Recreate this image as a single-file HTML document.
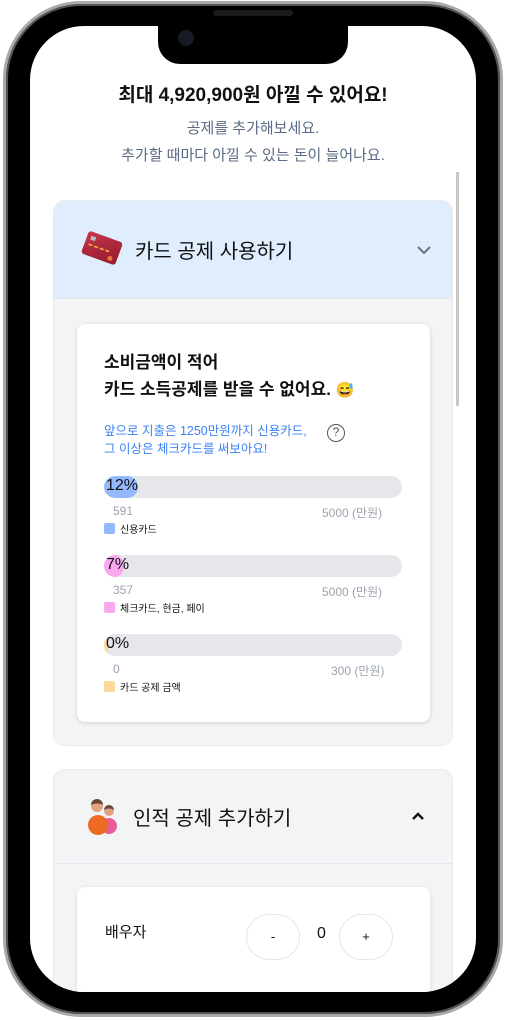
<!DOCTYPE html>
<html><head><meta charset="utf-8"><style>
*{margin:0;padding:0;box-sizing:border-box}
html,body{width:506px;height:1020px;overflow:hidden}
body{background:#fff;position:relative;font-family:"Liberation Sans","Noto Sans CJK KR",sans-serif}
.body{position:absolute;left:3px;top:1px;width:500px;height:1016px;border-radius:78px;background:#000;border:3px solid #a9aaa6;box-shadow:inset 0 0 0 2px #555}
.scr{position:absolute;left:30px;top:26px;width:446px;height:966px;border-radius:54px;background:#fff;overflow:hidden}
.notch{position:absolute;left:128px;top:-2px;width:190px;height:40px;background:#000;border-radius:0 0 22px 22px}
.a{position:absolute}
.t{left:0;width:446px;text-align:center}
.bar{position:absolute;left:74px;width:298px;height:22px;border-radius:11px;background:#e5e7eb;overflow:hidden}
.bar i{position:absolute;left:0;top:0;height:22px;border-radius:11px}
.bar b{position:absolute;left:2px;top:1px;font-weight:normal;font-size:16px;color:#111}
.lab{position:absolute;font-size:12px;color:#9ca3af}
.lg{position:absolute;left:74px;font-size:10px;color:#111;display:flex;align-items:center}
.lg s{display:inline-block;width:11px;height:11px;border-radius:2px;margin-right:5px}
.btn{position:absolute;width:54px;height:46px;border:1px solid #e5e7eb;border-radius:23px;text-align:center;line-height:44px;font-size:13px;color:#111}
</style></head><body>
<div class="body"></div>
<div class="scr">
<div class="a t" style="top:54px;font-size:19px;font-weight:bold;color:#111">최대 4,920,900원 아낄 수 있어요!</div>
<div class="a t" style="top:89px;font-size:15px;color:#5a6a85;line-height:27px">공제를 추가해보세요.<br>추가할 때마다 아낄 수 있는 돈이 늘어나요.</div>
<div class="a" style="left:426px;top:146px;width:3px;height:234px;background:#c8c8c8"></div>
<!-- section 1 -->
<div class="a" style="left:23px;top:174px;width:400px;height:546px;border-radius:12px;background:#f3f4f6;border:1px solid #e8eaee;overflow:hidden">
 <div class="a" style="left:0;top:0;width:400px;height:98px;background:#e0edfc;border-bottom:1px solid #e3e6ea"></div>
 <svg class="a" style="left:27px;top:26px" width="42" height="42" viewBox="0 0 42 42"><g transform="rotate(20 21 21)"><rect x="3" y="9" width="36" height="24" rx="3" fill="#b3243a"/><rect x="3" y="9" width="36" height="24" rx="3" fill="url(#g)"/><rect x="7" y="13" width="5" height="4" fill="#bbb"/><line x1="7" y1="22" x2="30" y2="22" stroke="#f5b041" stroke-width="1.6" stroke-dasharray="4 2"/><circle cx="32" cy="28" r="2.5" fill="#e8743b"/></g><defs><linearGradient id="g" x1="0" y1="0" x2="1" y2="1"><stop offset="0" stop-color="#d4455a" stop-opacity=".6"/><stop offset="1" stop-color="#7a1020" stop-opacity=".5"/></linearGradient></defs></svg>
 <div class="a" style="left:81px;top:34px;font-size:20px;color:#111">카드 공제 사용하기</div>
 <svg class="a" style="left:362px;top:43px" width="16" height="12"><path d="M2 3l6 6 6-6" fill="none" stroke="#6b7280" stroke-width="2"/></svg>
 <div class="a" style="left:23px;top:123px;width:353px;height:398px;background:#fff;border-radius:8px;box-shadow:0 1px 4px rgba(0,0,0,.15)">
  <div class="a" style="left:27px;top:25px;font-size:17px;font-weight:bold;color:#111;line-height:27px">소비금액이 적어<br>카드 소득공제를 받을 수 없어요. <span style="font-size:15px">😅</span></div>
  <div class="a" style="left:27px;top:98px;font-size:12.5px;color:#3b82f6;line-height:18px">앞으로 지출은 1250만원까지 신용카드,<br>그 이상은 체크카드를 써보아요!</div>
  <div class="a" style="left:250px;top:100px;width:18px;height:18px;border:1.5px solid #555;border-radius:50%;font-size:12px;text-align:center;line-height:15px;color:#555">?</div>
  <div class="bar" style="top:152px;left:27px"><i style="width:34px;background:#93b8fb"></i><b>12%</b></div>
  <div class="lab" style="left:36px;top:180px">591</div><div class="lab" style="left:245px;top:180px">5000 (만원)</div>
  <div class="lg" style="left:27px;top:197px"><s style="background:#93b8fb"></s>신용카드</div>
  <div class="bar" style="top:231px;left:27px"><i style="width:20px;background:#f9a8f0"></i><b>7%</b></div>
  <div class="lab" style="left:36px;top:259px">357</div><div class="lab" style="left:245px;top:259px">5000 (만원)</div>
  <div class="lg" style="left:27px;top:276px"><s style="background:#f9a8f0"></s>체크카드, 현금, 페이</div>
  <div class="bar" style="top:310px;left:27px"><i style="width:4px;background:#fcd99b"></i><b>0%</b></div>
  <div class="lab" style="left:36px;top:338px">0</div><div class="lab" style="left:254px;top:338px">300 (만원)</div>
  <div class="lg" style="left:27px;top:355px"><s style="background:#fcd99b"></s>카드 공제 금액</div>
 </div>
</div>
<!-- section 2 -->
<div class="a" style="left:23px;top:743px;width:400px;height:223px;border-radius:12px 12px 0 0;background:#f3f4f6;border:1px solid #e8eaee;border-bottom:none;overflow:hidden">
 <div class="a" style="left:0;top:93px;width:400px;height:1px;background:#e3e6ea"></div>
 <svg class="a" style="left:33px;top:28px" width="32" height="40" viewBox="0 0 32 40"><circle cx="10" cy="8" r="6" fill="#e0a580"/><path d="M4 7a6 6 0 0 1 12 0c-3-2-8-2-12 0z" fill="#6b4438"/><circle cx="22" cy="13" r="5" fill="#e0a580"/><path d="M17 12a5 5 0 0 1 10 0c-3-2-7-2-10 0z" fill="#6b4438"/><circle cx="22" cy="28" r="8" fill="#e85a9a"/><circle cx="11" cy="27" r="10" fill="#ec6a22"/></svg>
 <div class="a" style="left:79px;top:32px;font-size:20px;color:#111">인적 공제 추가하기</div>
 <svg class="a" style="left:356px;top:40px" width="16" height="12"><path d="M3 9l5-5 5 5" fill="none" stroke="#111" stroke-width="2.4"/></svg>
 <div class="a" style="left:23px;top:117px;width:353px;height:120px;background:#fff;border-radius:8px 8px 0 0;box-shadow:0 1px 4px rgba(0,0,0,.12)">
  <div class="a" style="left:28px;top:34px;font-size:15px;color:#111">배우자</div>
  <div class="btn" style="left:169px;top:27px">-</div>
  <div class="a" style="left:240px;top:38px;font-size:16px;color:#111">0</div>
  <div class="btn" style="left:262px;top:27px">+</div>
 </div>
</div>
<div class="notch"></div>
<div class="a" style="left:148px;top:4px;width:16px;height:16px;border-radius:50%;background:#151a24"></div>
</div>
<div class="a" style="left:213px;top:10px;width:80px;height:6px;border-radius:3px;background:#1a1a1a"></div>
</body></html>
